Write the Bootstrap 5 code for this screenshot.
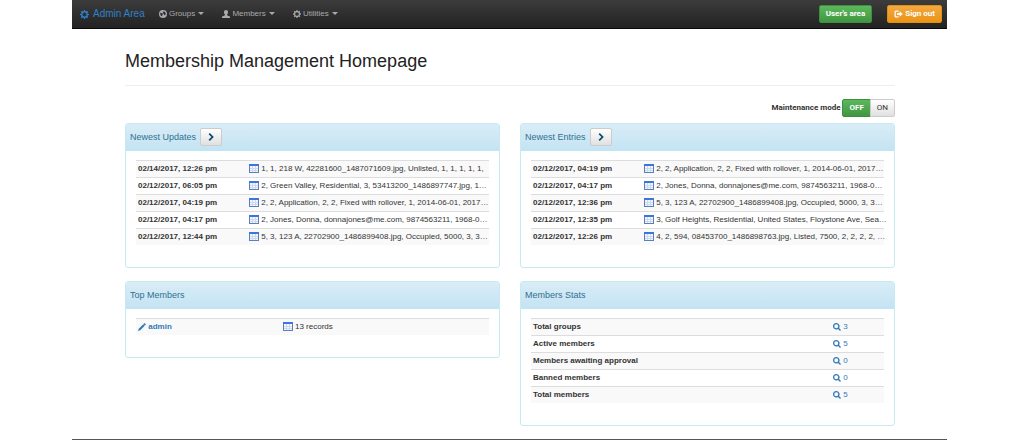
<!DOCTYPE html>
<html lang="en">
<head>
<meta charset="utf-8">
<meta name="viewport" content="width=device-width, initial-scale=1">
<title>Membership Management</title>
<link href="https://cdn.jsdelivr.net/npm/bootstrap@5.3.0/dist/css/bootstrap.min.css" rel="stylesheet">
<style>
body{font-family:"Liberation Sans",Arial,sans-serif;font-size:8px;line-height:12px;color:#333;background:#fff}
.page-shell{padding:0 73px 0 72px}
.admin-bar{height:29px;padding:0 5px 0 8px;background:linear-gradient(#3c3c3c,#222);border-bottom:1px solid #080808;font-size:8px}
.admin-bar .navbar-brand{font-size:10px;line-height:14px;color:#2f80cc;margin-right:14px;padding:0}
.admin-bar .navbar-nav .nav-link{color:#aaa;padding:0;font-size:8px;line-height:12px}
.admin-bar .dropdown-toggle::after{border-width:3px;border-bottom:0;margin-left:3px;vertical-align:1px}
.nav-menus{gap:18px}
.account-actions{gap:15px}
svg{fill:currentColor;flex:none}
.btn,.mode-label{font-family:Roboto,"Liberation Sans",sans-serif}
.mode-label{margin-right:2px}
.btn{--bs-btn-font-size:8px;--bs-btn-line-height:12px;--bs-btn-padding-x:6px;--bs-btn-padding-y:2px;--bs-btn-border-radius:2px}
.btn-area{background:linear-gradient(#5cb85c,#419641);border-color:#3e8f3e;color:#fff;font-weight:700}
.btn-leave{background:linear-gradient(#f2a93f,#eb9316);border-color:#e38d13;color:#fff;font-weight:700}
.btn-plain{background:linear-gradient(#fff,#e0e0e0);border-color:#ccc;color:#333}
.page-body{padding:0 52px 13px 53px}
.page-title{font-size:18px;line-height:24px;font-weight:400;color:#222;padding:20px 0 12px;border-bottom:1px solid #eee;margin:0 0 13px}
.panels{display:grid;grid-template-columns:1fr 1fr;gap:13px 20px;align-items:start;margin-top:6px}
.card{--bs-card-border-color:#c6eaf2;--bs-card-border-radius:3px;--bs-card-inner-border-radius:2px}
.card-header{height:27px;padding:0 4px;background:linear-gradient(#d9edf7,#c4e3f3);color:#31708f;font-size:9px;border-color:#bce8f1}
.card-body{padding:9px 10px 22px}
.btn-go{padding:2px 6px;color:#0d4a70}
.table{--bs-table-striped-bg:#f9f9f9;--bs-table-color:#333;--bs-table-striped-color:#333;table-layout:fixed;margin:0;border-top:1px solid #ddd;font-size:8px;white-space:nowrap}
.table>tbody>tr>*{padding:2px 0 2px 2px;line-height:12px;border-bottom:1px solid #ddd}
.table>tbody>tr:last-child>*{border-bottom:0}
.col-when{width:111px}.col-name{width:41%}.col-stat{width:85%}
a{color:#337ab7;text-decoration:none}
.foot-line{height:1px;background:#555;margin:0}
</style>
</head>
<body>
<svg class="d-none" xmlns="http://www.w3.org/2000/svg">
<symbol id="cog" viewBox="0 0 16 16"><path fill-rule="evenodd" d="M7 0h2l.4 2.2 1.3.6L12.600 1.500 14.500 3.400 13.200 5.300l.6 1.300L16 7v2l-2.200.4-.6 1.300 1.300 1.900-1.900 1.900-1.900-1.300-1.300.6L9 16H7l-.4-2.200-1.300-.6-1.900 1.300-1.900-1.900 1.300-1.900-.6-1.300L0 9V7l2.200-.4.600-1.300L1.500 3.400l1.900-1.900 1.900 1.300 1.300-.6zM8 4.300a3.700 3.700 0 1 0 0 7.400 3.700 3.700 0 0 0 0-7.400z"/></symbol>
<symbol id="globe" viewBox="0 0 16 16"><path fill-rule="evenodd" d="M8 0a8 8 0 1 0 0 16A8 8 0 0 0 8 0zM3 5l2 1 3 1.500-1 2-1 3C4 12 2.500 10.500 2.500 8zM9 2.500l3 1.500 1.500 3-1 3-2 .5-1-2.500-2-2z"/></symbol>
<symbol id="person" viewBox="0 0 16 16"><path d="M8 0c2.500 0 4 1.800 4 4.500 0 2-1 3.800-2 4.700v1.300c1.500 1 5 1.500 6 3V16H0v-2.500c1-1.500 4.500-2 6-3V9.200C5 8.300 4 6.500 4 4.500 4 1.800 5.500 0 8 0z"/></symbol>
<symbol id="leave" viewBox="0 0 18 16"><path d="M9 1H4a3 3 0 0 0-3 3v8a3 3 0 0 0 3 3h5v-2.500H4.500a1 1 0 0 1-1-1v-7a1 1 0 0 1 1-1H9zM11 2.500V6H6v4h5v3.500L17.500 8z"/></symbol>
<symbol id="sheet" viewBox="0 0 10 9"><path fill="#5c7fb8" d="M0 0h10v9H0z"/><path fill="#3a76dd" d="M0 0h10v2H0z"/><path fill="#f3f6fc" d="M1 2h2v2H1zm3 0h2v2H4zm3 0h2v2H7zM1 5h2v1H1zm3 0h2v1H4zm3 0h2v1H7zM1 7h2v1H1zm3 0h2v1H4zm3 0h2v1H7z"/><path fill="#ccdaf0" d="M3 2h1v6H3zm3 0h1v6H6zM1 4h8v1H1zm0 2h8v1H1z"/></symbol>
<symbol id="lens" viewBox="0 0 16 16"><path fill-rule="evenodd" d="M6.500 0a6.500 6.500 0 1 0 3.600 11.900L14 15.800l2-2-3.900-3.700A6.500 6.500 0 0 0 6.500 0zm0 2.500a4 4 0 1 1 0 8 4 4 0 0 1 0-8z"/></symbol>
<symbol id="pencil" viewBox="0 0 16 16"><path d="M13 0l3 3-2 2-3-3zM10.500 2.500l3 3-9 9L0 16l1.500-4.500z"/></symbol>
<symbol id="chevron" viewBox="0 0 10 10"><path d="M2 1.500L3.500 0l5 5-5 5L2 8.500 5.500 5z"/></symbol>
</svg>
<div class="page-shell">
<nav class="navbar navbar-expand admin-bar" aria-label="Admin">
  <a class="navbar-brand d-flex align-items-center gap-1" href="#"><svg width="9" height="9"><use href="#cog"/></svg><span>Admin Area</span></a>
  <div class="navbar-nav nav-menus">
    <a class="nav-link dropdown-toggle" href="#" role="button" data-bs-toggle="dropdown"><svg width="8" height="8"><use href="#globe"/></svg> Groups</a>
    <a class="nav-link dropdown-toggle" href="#" role="button" data-bs-toggle="dropdown"><svg width="8" height="8"><use href="#person"/></svg> Members</a>
    <a class="nav-link dropdown-toggle" href="#" role="button" data-bs-toggle="dropdown"><svg width="8" height="8"><use href="#cog"/></svg> Utilities</a>
  </div>
  <div class="d-flex ms-auto account-actions">
    <button type="button" class="btn btn-area">User's area</button>
    <button type="button" class="btn btn-leave"><svg width="9" height="8"><use href="#leave"/></svg> Sign out</button>
  </div>
</nav>
<main class="page-body">
  <h1 class="page-title">Membership Management Homepage</h1>
  <div class="d-flex justify-content-end align-items-center">
    <b id="mode-label" class="mode-label">Maintenance mode</b>
    <div class="btn-group" role="group" aria-labelledby="mode-label">
      <button type="button" class="btn btn-area">OFF</button><button type="button" class="btn btn-plain">ON</button>
    </div>
  </div>
  <div class="panels">
    <section class="card">
      <div class="card-header d-flex align-items-center gap-1"><span>Newest Updates</span><button type="button" class="btn btn-plain btn-go" aria-label="All updates"><svg width="8" height="8"><use href="#chevron"/></svg></button></div>
      <div class="card-body"><table class="table table-striped"><colgroup><col class="col-when"><col></colgroup><tbody>
        <tr><th scope="row">02/14/2017, 12:26 pm</th><td><svg width="10" height="9"><use href="#sheet"/></svg> 1, 1, 218 W, 42281600_1487071609.jpg, Unlisted, 1, 1, 1, 1, 1,</td></tr>
        <tr><th scope="row">02/12/2017, 06:05 pm</th><td><svg width="10" height="9"><use href="#sheet"/></svg> 2, Green Valley, Residential, 3, 53413200_1486897747.jpg, 1…</td></tr>
        <tr><th scope="row">02/12/2017, 04:19 pm</th><td><svg width="10" height="9"><use href="#sheet"/></svg> 2, 2, Application, 2, 2, Fixed with rollover, 1, 2014-06-01, 2017…</td></tr>
        <tr><th scope="row">02/12/2017, 04:17 pm</th><td><svg width="10" height="9"><use href="#sheet"/></svg> 2, Jones, Donna, donnajones@me.com, 9874563211, 1968-0…</td></tr>
        <tr><th scope="row">02/12/2017, 12:44 pm</th><td><svg width="10" height="9"><use href="#sheet"/></svg> 5, 3, 123 A, 22702900_1486899408.jpg, Occupied, 5000, 3, 3…</td></tr>
      </tbody></table></div>
    </section>
    <section class="card">
      <div class="card-header d-flex align-items-center gap-1"><span>Newest Entries</span><button type="button" class="btn btn-plain btn-go" aria-label="All entries"><svg width="8" height="8"><use href="#chevron"/></svg></button></div>
      <div class="card-body"><table class="table table-striped"><colgroup><col class="col-when"><col></colgroup><tbody>
        <tr><th scope="row">02/12/2017, 04:19 pm</th><td><svg width="10" height="9"><use href="#sheet"/></svg> 2, 2, Application, 2, 2, Fixed with rollover, 1, 2014-06-01, 2017…</td></tr>
        <tr><th scope="row">02/12/2017, 04:17 pm</th><td><svg width="10" height="9"><use href="#sheet"/></svg> 2, Jones, Donna, donnajones@me.com, 9874563211, 1968-0…</td></tr>
        <tr><th scope="row">02/12/2017, 12:36 pm</th><td><svg width="10" height="9"><use href="#sheet"/></svg> 5, 3, 123 A, 22702900_1486899408.jpg, Occupied, 5000, 3, 3…</td></tr>
        <tr><th scope="row">02/12/2017, 12:35 pm</th><td><svg width="10" height="9"><use href="#sheet"/></svg> 3, Golf Heights, Residential, United States, Floystone Ave, Sea…</td></tr>
        <tr><th scope="row">02/12/2017, 12:26 pm</th><td><svg width="10" height="9"><use href="#sheet"/></svg> 4, 2, 594, 08453700_1486898763.jpg, Listed, 7500, 2, 2, 2, 2, …</td></tr>
      </tbody></table></div>
    </section>
    <section class="card">
      <div class="card-header d-flex align-items-center">Top Members</div>
      <div class="card-body"><table class="table table-striped"><colgroup><col class="col-name"><col></colgroup><tbody>
        <tr><th scope="row"><a href="#"><svg width="8" height="8"><use href="#pencil"/></svg> admin</a></th><td><svg width="10" height="9"><use href="#sheet"/></svg> 13 records</td></tr>
      </tbody></table></div>
    </section>
    <section class="card">
      <div class="card-header d-flex align-items-center">Members Stats</div>
      <div class="card-body"><table class="table table-striped"><colgroup><col class="col-stat"><col></colgroup><tbody>
        <tr><th scope="row">Total groups</th><td><a href="#"><svg width="8" height="8"><use href="#lens"/></svg> 3</a></td></tr>
        <tr><th scope="row">Active members</th><td><a href="#"><svg width="8" height="8"><use href="#lens"/></svg> 5</a></td></tr>
        <tr><th scope="row">Members awaiting approval</th><td><a href="#"><svg width="8" height="8"><use href="#lens"/></svg> 0</a></td></tr>
        <tr><th scope="row">Banned members</th><td><a href="#"><svg width="8" height="8"><use href="#lens"/></svg> 0</a></td></tr>
        <tr><th scope="row">Total members</th><td><a href="#"><svg width="8" height="8"><use href="#lens"/></svg> 5</a></td></tr>
      </tbody></table></div>
    </section>
  </div>
</main>
<div class="foot-line"></div>
</div>
<script src="https://cdn.jsdelivr.net/npm/bootstrap@5.3.0/dist/js/bootstrap.bundle.min.js"></script>
</body>
</html>
